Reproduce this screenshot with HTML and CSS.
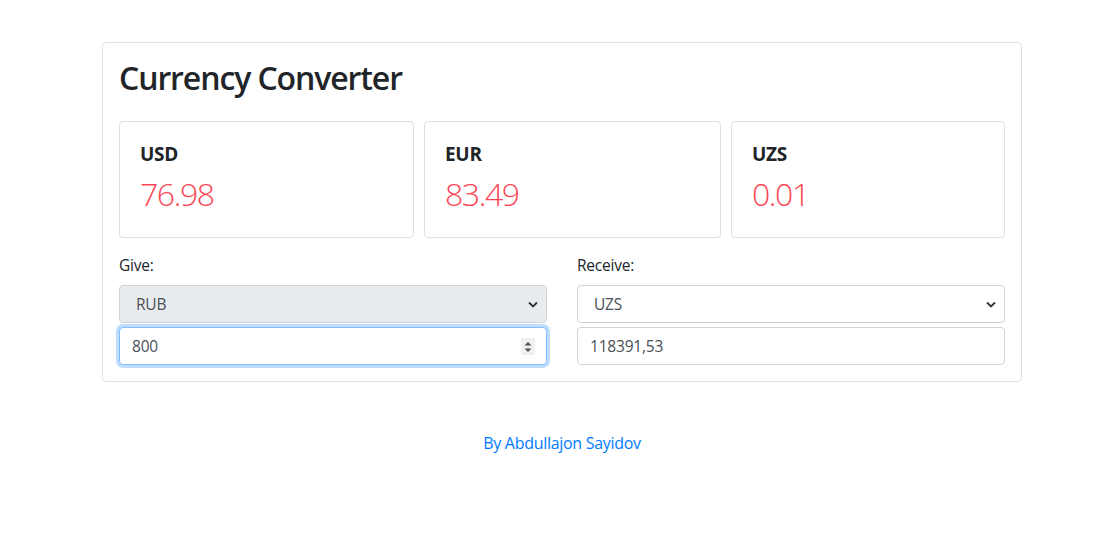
FILE: index.html
```html
<!DOCTYPE html>
<html lang="en">
<head>
<meta charset="utf-8">
<title>Currency Converter</title>
<link rel="stylesheet" href="styles.css">
</head>
<body>
<main class="page">
  <section class="converter">
    <h2 class="title">Currency Converter</h2>
    <div class="rates">
      <div class="rate">
        <h5 class="rate-code">USD</h5>
        <div class="rate-value">76.98</div>
      </div>
      <div class="rate">
        <h5 class="rate-code">EUR</h5>
        <div class="rate-value">83.49</div>
      </div>
      <div class="rate">
        <h5 class="rate-code">UZS</h5>
        <div class="rate-value">0.01</div>
      </div>
    </div>
    <div class="form-row">
      <div class="form-col">
        <label class="form-label">Give:</label>
        <div class="select-wrap">
          <div class="select select-disabled">RUB</div>
          <svg class="chevron" width="10" height="7" viewBox="0 0 10 7"><path d="M1 1.5 L5 5.5 L9 1.5" fill="none" stroke="#333" stroke-width="1.8"/></svg>
        </div>
        <div class="input-wrap">
          <div class="input input-focus">800</div>
          <div class="spinner">
            <svg width="12" height="16" viewBox="0 0 12 16"><path d="M2.5 6.5 L6 3 L9.5 6.5 Z" fill="#505050"/><path d="M2.5 9.5 L6 13 L9.5 9.5 Z" fill="#505050"/></svg>
          </div>
        </div>
      </div>
      <div class="form-col">
        <label class="form-label">Receive:</label>
        <div class="select-wrap">
          <div class="select">UZS</div>
          <svg class="chevron" width="10" height="7" viewBox="0 0 10 7"><path d="M1 1.5 L5 5.5 L9 1.5" fill="none" stroke="#333" stroke-width="1.8"/></svg>
        </div>
        <div class="input-wrap">
          <div class="input">118391,53</div>
        </div>
      </div>
    </div>
  </section>
  <footer class="footer">
    <a class="author" href="#">By Abdullajon Sayidov</a>
  </footer>
</main>
</body>
</html>
```

FILE: styles.css
```css
html, body {
  margin: 0;
  padding: 0;
  background: #fff;
}
body {
  font-family: "Open Sans", "Noto Sans", "DejaVu Sans", sans-serif;
  font-size: 16px;
  line-height: 1.5;
  color: #212529;
}
.page {
  padding-top: 42px;
}
.converter {
  width: 920px;
  box-sizing: border-box;
  margin-left: calc(50% - 457px);
  border: 1px solid #dfdfdf;
  border-radius: 4px;
  padding: 16px;
}
.title {
  margin: 0 0 24px 0;
  font-size: 32px;
  font-weight: 600;
  line-height: 1.2;
  letter-spacing: -1.1px;
}
.rates {
  display: grid;
  grid-template-columns: 295fr 297fr 274fr;
  gap: 10px;
}
.rate {
  border: 1px solid #dfdfdf;
  border-radius: 4px;
  padding: 20px 20px 24px;
}
.rate-code {
  margin: 0 0 9px 0;
  font-size: 19px;
  font-weight: 700;
  line-height: 24px;
  letter-spacing: -0.3px;
}
.rate-value {
  font-size: 32px;
  font-weight: 300;
  line-height: 38px;
  color: #fa4656;
  letter-spacing: -1.4px;
}
.form-row {
  display: grid;
  grid-template-columns: 1fr 1fr;
  column-gap: 30px;
  margin-top: 15px;
  font-size: 15.5px;
  line-height: 24px;
}
.form-label {
  display: block;
  margin-bottom: 8px;
  letter-spacing: -0.2px;
}
.select-wrap, .input-wrap {
  position: relative;
}
.select, .input {
  height: 38px;
  box-sizing: border-box;
  border: 1px solid #ced4da;
  border-radius: 4px;
  color: #495057;
  padding: 6px 12px;
  background: #fff;
  letter-spacing: -0.2px;
}
.select {
  padding-left: 16px;
}
.select-disabled {
  background: #e9ecef;
}
.input-wrap {
  margin-top: 4px;
}
.input-focus {
  border-color: #80bdff;
  box-shadow: 0 0 0 3px rgba(0, 123, 255, 0.25);
}
.chevron {
  position: absolute;
  right: 9px;
  top: 16px;
}
.spinner {
  position: absolute;
  right: 12px;
  top: 11px;
  width: 14px;
  height: 17px;
  background: #f0f0f0;
  display: flex;
  align-items: center;
  justify-content: center;
}
.footer {
  text-align: center;
  margin-top: 49px;
  padding-left: 6px;
}
.author {
  color: #007bff;
  text-decoration: none;
  letter-spacing: -0.3px;
}
```
